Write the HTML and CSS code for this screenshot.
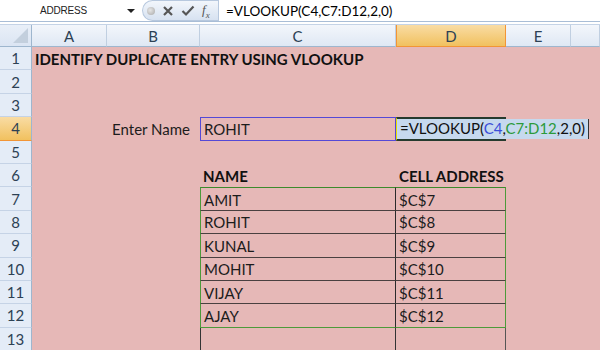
FILE: index.html
```html
<!DOCTYPE html>
<html lang="en">
<head>
  <meta charset="UTF-8">
  <title>VLOOKUP duplicate</title>
  <link rel="stylesheet" href="styles.css">
</head>
<body>

<div class="formula-bar">
  <div class="name-box">
    <span class="name">ADDRESS</span>
    <span class="drop"></span>
  </div>
  <div class="fx-buttons">
    <span class="dot"></span>
    <svg class="btn" width="12" height="12" viewBox="0 0 12 12"><path d="M2 2 L10 10 M10 2 L2 10" stroke="#555" stroke-width="2.2" fill="none"/></svg>
    <svg class="btn" width="14" height="12" viewBox="0 0 14 12"><path d="M1.5 6 L5 9.5 L12.5 1.5" stroke="#555" stroke-width="2.2" fill="none"/></svg>
    <span class="fx">f<sub>x</sub></span>
  </div>
  <div class="formula-input">=VLOOKUP(C4,C7:D12,2,0)</div>
</div>

<div class="sheet">
  <div class="corner"></div>
  <div class="col-head">A</div>
  <div class="col-head">B</div>
  <div class="col-head">C</div>
  <div class="col-head active">D</div>
  <div class="col-head">E</div>
  <div class="col-head"></div>

  <div class="row-head">1</div>
  <div class="cell bold">IDENTIFY DUPLICATE ENTRY USING VLOOKUP</div>
  <div class="cell"></div><div class="cell"></div><div class="cell"></div><div class="cell"></div><div class="cell"></div>

  <div class="row-head">2</div>
  <div class="cell"></div><div class="cell"></div><div class="cell"></div><div class="cell"></div><div class="cell"></div><div class="cell"></div>

  <div class="row-head">3</div>
  <div class="cell"></div><div class="cell"></div><div class="cell"></div><div class="cell"></div><div class="cell"></div><div class="cell"></div>

  <div class="row-head active">4</div>
  <div class="cell"></div>
  <div class="cell right">Enter Name</div>
  <div class="cell input">ROHIT</div>
  <div class="cell editing"><span class="edit-text">=VLOOKUP(<span class="ref-a">C4</span>,<span class="ref-b">C7:D12</span>,2,0)</span></div>
  <div class="cell"></div><div class="cell"></div>

  <div class="row-head">5</div>
  <div class="cell"></div><div class="cell"></div><div class="cell"></div><div class="cell"></div><div class="cell"></div><div class="cell"></div>

  <div class="row-head">6</div>
  <div class="cell"></div><div class="cell"></div>
  <div class="cell bold">NAME</div>
  <div class="cell bold">CELL ADDRESS</div>
  <div class="cell"></div><div class="cell"></div>

  <div class="row-head">7</div>
  <div class="cell"></div><div class="cell"></div>
  <div class="cell t tc first">AMIT</div>
  <div class="cell t td first">$C$7</div>
  <div class="cell"></div><div class="cell"></div>

  <div class="row-head">8</div>
  <div class="cell"></div><div class="cell"></div>
  <div class="cell t tc">ROHIT</div>
  <div class="cell t td">$C$8</div>
  <div class="cell"></div><div class="cell"></div>

  <div class="row-head">9</div>
  <div class="cell"></div><div class="cell"></div>
  <div class="cell t tc">KUNAL</div>
  <div class="cell t td">$C$9</div>
  <div class="cell"></div><div class="cell"></div>

  <div class="row-head">10</div>
  <div class="cell"></div><div class="cell"></div>
  <div class="cell t tc">MOHIT</div>
  <div class="cell t td">$C$10</div>
  <div class="cell"></div><div class="cell"></div>

  <div class="row-head">11</div>
  <div class="cell"></div><div class="cell"></div>
  <div class="cell t tc">VIJAY</div>
  <div class="cell t td">$C$11</div>
  <div class="cell"></div><div class="cell"></div>

  <div class="row-head">12</div>
  <div class="cell"></div><div class="cell"></div>
  <div class="cell t tc last">AJAY</div>
  <div class="cell t td last">$C$12</div>
  <div class="cell"></div><div class="cell"></div>

  <div class="row-head">13</div>
  <div class="cell"></div><div class="cell"></div>
  <div class="cell empty-c"></div>
  <div class="cell empty-d"></div>
  <div class="cell"></div><div class="cell"></div>
</div>

</body>
</html>
```

FILE: styles.css
```css
* { box-sizing: border-box; }
body { margin: 0; padding: 0; background: #fff; font-family: Lato, "Open Sans", sans-serif; overflow: hidden; }

/* formula bar */
.formula-bar { display: flex; height: 22px; background: #fff; border-bottom: 1px solid #a9bdd6; }
.name-box { width: 142px; display: flex; align-items: center; justify-content: space-between; padding: 0 4px 0 0; }
.name-box .name { flex: 1; text-align: center; font-family: "Liberation Sans", Arial, sans-serif; font-size: 10px; color: #222; letter-spacing: -0.2px; }
.drop { width: 0; height: 0; border-left: 4px solid transparent; border-right: 4px solid transparent; border-top: 4px solid #222; margin-right: 3px; }
.fx-buttons { width: 76px; display: flex; align-items: center; gap: 7px; padding-left: 4px; background: linear-gradient(#f2f6fb, #d7e2f1); border: 1px solid #b7c8de; border-right: none; border-radius: 11px 0 0 11px; margin-top: 0; }
.dot { width: 8px; height: 8px; border-radius: 50%; background: radial-gradient(circle at 40% 40%, #e6e6e6, #a8a8a8); }
.fx { font-family: "Liberation Serif", serif; font-style: italic; font-size: 13px; color: #555; }
.fx sub { font-size: 9px; }
.formula-input { flex: 1; display: flex; align-items: center; padding-left: 7px; font-family: Lato, sans-serif; font-size: 13.5px; color: #000; border-left: 1px solid #b7c8de; }

/* sheet grid */
.sheet { display: grid; grid-template-columns: 32px 75px 93px 196px 110px 65px 1fr; grid-template-rows: 22px repeat(13, 23.4px); margin-top: 2px; background: #e6b8b7; border-top: 1px solid #c5d3e6; }

.corner { background: linear-gradient(#e9eff8, #dbe5f3); border-right: 1px solid #9eb6ce; border-bottom: 1px solid #9eb6ce; position: relative; }
.corner::after { content: ""; position: absolute; right: 3px; bottom: 3px; border-left: 15px solid transparent; border-bottom: 15px solid #c3cfdd; }

.col-head { display: flex; align-items: center; justify-content: center; background: linear-gradient(#f3f6fb, #dfe8f4); border-right: 1px solid #c0cfe1; border-bottom: 1px solid #9eb6ce; color: #2d4154; font-size: 15px; }
.col-head.active { background: linear-gradient(#f9dca4, #f1c15f); border: 1px solid #f29536; border-top: none; }

.row-head { display: flex; align-items: center; justify-content: center; background: #e4ecf7; border-right: 1px solid #9eb6ce; border-bottom: 1px solid #c5d3e6; color: #2d4154; font-size: 15px; }
.row-head.active { background: linear-gradient(#f9dca4, #f1c15f); border-bottom: 1px solid #f29536; }

.cell { display: flex; align-items: center; padding: 1px 3px 0; font-size: 15px; color: #1c1c1c; white-space: nowrap; min-width: 0; }
.bold { font-weight: bold; color: #111; }
.right { justify-content: flex-end; padding-right: 10px; }
.input { border: 1px solid #5449d6; }
.editing { border-top: 2px solid #263a2e; border-bottom: 2px solid #263a2e; border-left: 1px solid #e8e000; padding: 0; overflow: visible; }
.edit-text { display: block; width: 192px; height: 100%; line-height: 19px; padding: 0 3px; background: #c6d9ee; border-right: 1px solid #333; color: #111; flex-shrink: 0; }
.ref-a { color: #3b4fd9; }
.ref-b { color: #2c9a3a; }

/* table C7:D12 */
.t { border-bottom: 1px solid #4a4040; }
.tc { border-left: 1px solid #4d9a3a; border-right: 1px solid #2b2b2b; }
.td { border-right: 1px solid #4d9a3a; }
.first { border-top: 1px solid #3d8a2c; }
.last { border-bottom: 1px solid #4d9a3a; }
.empty-c { border-left: 1px solid #333; border-right: 1px solid #333; }
.empty-d { border-right: 1px solid #555; }
```
